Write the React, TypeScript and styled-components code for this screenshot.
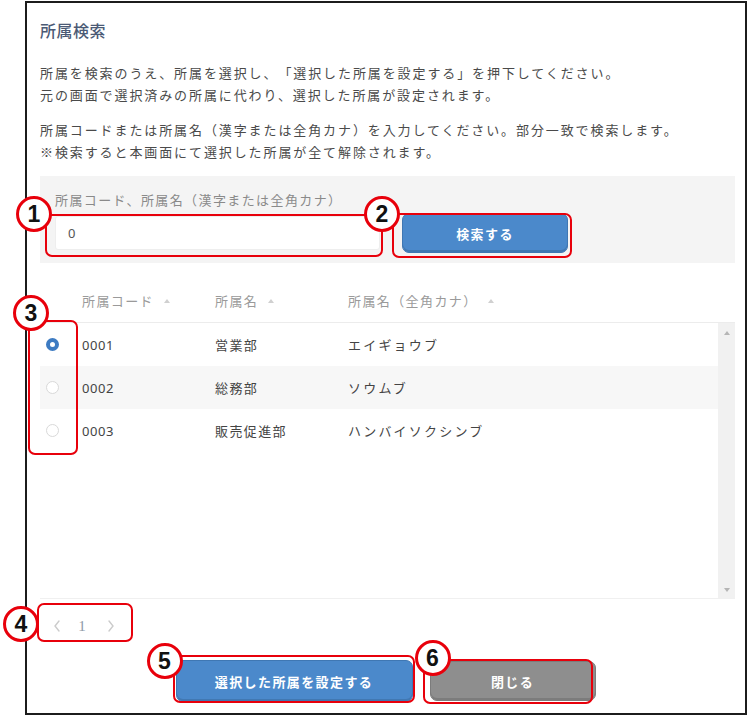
import React, {useState} from 'react';
import styled, {createGlobalStyle} from 'styled-components';

const GlobalStyle = createGlobalStyle`
  body {
    margin: 0;
    background: #fff;
    font-family: "Noto Sans CJK JP", "Noto Sans", sans-serif;
    text-spacing-trim: space-all;
  }
`;

const Frame = styled.div`
  box-sizing: border-box;
  margin: 1px 0 0 25px;
  width: 722px;
  height: 714px;
  border: 2px solid #1c1c1c;
  padding: 15px 10px 0 13px;
  display: flex;
  flex-direction: column;
`;

const Title = styled.h1`
  margin: 0;
  font-size: 16px;
  line-height: 24px;
  font-weight: 500;
  letter-spacing: 0.5px;
  color: #4b5a75;
`;

const Paragraph = styled.p<{ $gap: number }>`
  margin: ${p => p.$gap}px 0 0;
  font-size: 13px;
  line-height: 22px;
  letter-spacing: 1.9px;
  color: #4a4a4a;
  white-space: nowrap;
`;

const SearchPanel = styled.div`
  margin-top: 13px;
  background: #f4f4f4;
  padding: 14px 15px 10px;
  display: flex;
  flex-direction: column;
`;

const Label = styled.div`
  font-size: 13px;
  line-height: 20px;
  letter-spacing: 1.4px;
  color: #8a8a8a;
`;

const SearchRow = styled.div`
  margin-top: 3px;
  height: 40px;
  display: flex;
  align-items: center;
  gap: 22px;
`;

const Marked = styled.div`
  position: relative;
  display: flex;
`;

const Outline = styled.div<{ $t: number; $l: number; $r: number; $b: number }>`
  position: absolute;
  top: ${p => p.$t}px;
  left: ${p => p.$l}px;
  right: ${p => p.$r}px;
  bottom: ${p => p.$b}px;
  border: 2px solid #e8000b;
  border-radius: 7px;
  pointer-events: none;
`;

const Badge = styled.div<{ $x: number; $y: number }>`
  position: absolute;
  left: ${p => p.$x - 18}px;
  top: ${p => p.$y - 18}px;
  box-sizing: border-box;
  width: 36px;
  height: 36px;
  border-radius: 50%;
  border: 3px solid #e8000b;
  background: #fff;
  display: flex;
  align-items: center;
  justify-content: center;
  font-family: "Liberation Sans", Arial, sans-serif;
  font-weight: 700;
  font-size: 23px;
  color: #111;
  z-index: 2;
`;

const Input = styled.input`
  box-sizing: border-box;
  width: 325px;
  height: 34px;
  border: 1px solid #eeeeee;
  border-radius: 3px;
  background: #fff;
  padding: 0 12px;
  font-size: 13px;
  font-family: "Noto Sans", sans-serif;
  color: #555;
  outline: none;
`;

const Button = styled.button<{ $tone: 'blue' | 'gray'; $w: number }>`
  box-sizing: border-box;
  width: ${p => p.$w}px;
  height: ${p => (p.$tone === 'gray' ? 40 : 42)}px;
  border: 1px solid ${p => (p.$tone === 'blue' ? '#3f77b3' : '#7c7c7c')};
  border-radius: 7px;
  background: ${p => (p.$tone === 'blue' ? '#4b89cb' : '#8e8e8e')};
  box-shadow: inset 0 -2px 0 rgba(0, 0, 0, 0.12);
  color: #fff;
  font-family: "Noto Sans CJK JP", sans-serif;
  font-size: 13px;
  font-weight: 700;
  letter-spacing: 1.4px;
  cursor: pointer;
`;

const SearchButton = styled(Button)`
  height: 40px;
`;

const cols = '40px 133px 133px 1fr';

const HeaderRow = styled.div`
  margin-top: 16px;
  height: 43px;
  display: grid;
  grid-template-columns: ${cols};
  align-items: center;
  border-bottom: 1px solid #ececec;
`;

const HeadCell = styled.div`
  padding-left: 2px;
  font-size: 13px;
  letter-spacing: 1.4px;
  color: #9a9a9a;
  display: flex;
  align-items: center;
  gap: 10px;
`;

const SortArrow = styled.span`
  width: 0;
  height: 0;
  border-left: 3px solid transparent;
  border-right: 3px solid transparent;
  border-bottom: 4px solid #d0d0d0;
`;

const Body = styled.div`
  position: relative;
  height: 275px;
  display: flex;
  border-bottom: 1px solid #f0f0f0;
`;

const Rows = styled.div`
  flex: 1;
  display: flex;
  flex-direction: column;
`;

const Row = styled.div<{ $alt: boolean }>`
  height: 43px;
  display: grid;
  grid-template-columns: ${cols};
  align-items: center;
  background: ${p => (p.$alt ? '#f7f7f7' : '#fff')};
  cursor: pointer;
`;

const Cell = styled.div<{ $kana?: boolean }>`
  padding-left: 2px;
  font-size: 13px;
  letter-spacing: ${p => (p.$kana ? 2.2 : 1.4)}px;
  color: #444;
`;

const Code = styled.div`
  padding-left: 2px;
  font-family: "Noto Sans", sans-serif;
  font-size: 13px;
  letter-spacing: 0.6px;
  color: #444;
`;

const Radio = styled.span<{ $on: boolean }>`
  box-sizing: border-box;
  margin-left: 6px;
  width: 13px;
  height: 13px;
  border-radius: 50%;
  border: ${p => (p.$on ? '4px solid #3d7bc2' : '1px solid #d9d9d9')};
  background: #fff;
`;

const ScrollTrack = styled.div`
  width: 17px;
  background: #f1f1f1;
  display: flex;
  flex-direction: column;
  justify-content: space-between;
  align-items: center;
  padding: 8px 0 6px;
`;

const Arrow = styled.span<{ $down?: boolean }>`
  width: 0;
  height: 0;
  border-left: 3px solid transparent;
  border-right: 3px solid transparent;
  ${p => (p.$down ? 'border-top: 4px solid #b5b5b5;' : 'border-bottom: 4px solid #b5b5b5;')}
`;

const Pager = styled.div`
  position: relative;
  margin-top: 12px;
  width: 93px;
  height: 30px;
  display: flex;
  align-items: center;
  padding-left: 13px;
  box-sizing: border-box;
`;

const PageNum = styled.span`
  width: 14px;
  margin: 0 18px 0 14px;
  text-align: center;
  font-family: "Liberation Serif", serif;
  font-size: 15px;
  color: #8f9aa8;
`;

const Chevron: React.FC<{ right?: boolean }> = ({right}) => (
    <svg width="8" height="14" viewBox="0 0 8 14">
        <path
            d={right ? 'M2 2 L6 7 L2 12' : 'M6 2 L2 7 L6 12'}
            fill="none"
            stroke="#cbcbcb"
            strokeWidth="1.4"
            strokeLinecap="round"
        />
    </svg>
);

const Footer = styled.div`
  margin-top: 19px;
  display: flex;
  justify-content: center;
  align-items: center;
  gap: 17px;
  padding-right: 4px;
`;

const rows = [
    {code: '0001', name: '営業部', kana: 'エイギョウブ'},
    {code: '0002', name: '総務部', kana: 'ソウムブ'},
    {code: '0003', name: '販売促進部', kana: 'ハンバイソクシンブ'},
];

const App: React.FC = () => {
    const [selected, setSelected] = useState('0001');
    const [keyword, setKeyword] = useState('0');

    return (
        <>
            <GlobalStyle />
            <Frame>
                <Title>所属検索</Title>
                <Paragraph $gap={20}>
                    所属を検索のうえ、所属を選択し、「選択した所属を設定する」を押下してください。<br />
                    元の画面で選択済みの所属に代わり、選択した所属が設定されます。
                </Paragraph>
                <Paragraph $gap={13}>
                    所属コードまたは所属名（漢字または全角カナ）を入力してください。部分一致で検索します。<br />
                    ※検索すると本画面にて選択した所属が全て解除されます。
                </Paragraph>

                <SearchPanel>
                    <Label>所属コード、所属名（漢字または全角カナ）</Label>
                    <SearchRow>
                        <Marked>
                            <Input value={keyword} onChange={e => setKeyword(e.target.value)} />
                            <Outline $t={-2} $l={-10} $r={-3} $b={-7} />
                            <Badge $x={-21} $y={-2}>1</Badge>
                        </Marked>
                        <Marked>
                            <SearchButton $tone="blue" $w={166}>検索する</SearchButton>
                            <Outline $t={0} $l={-10} $r={-4} $b={-5} />
                            <Badge $x={-20} $y={1}>2</Badge>
                        </Marked>
                    </SearchRow>
                </SearchPanel>

                <HeaderRow>
                    <div />
                    <HeadCell>所属コード<SortArrow /></HeadCell>
                    <HeadCell>所属名<SortArrow /></HeadCell>
                    <HeadCell>所属名（全角カナ）<SortArrow /></HeadCell>
                </HeaderRow>
                <Body>
                    <Rows>
                        {rows.map((r, i) => (
                            <Row key={r.code} $alt={i % 2 === 1} onClick={() => setSelected(r.code)}>
                                <Radio $on={selected === r.code} />
                                <Code>{r.code}</Code>
                                <Cell>{r.name}</Cell>
                                <Cell $kana>{r.kana}</Cell>
                            </Row>
                        ))}
                    </Rows>
                    <ScrollTrack>
                        <Arrow />
                        <Arrow $down />
                    </ScrollTrack>
                    <Outline $t={-3} $l={-12} $r={657} $b={143} />
                    <Badge $x={-9} $y={-10}>3</Badge>
                </Body>

                <Pager>
                    <Chevron />
                    <PageNum>1</PageNum>
                    <Chevron right />
                    <Outline $t={-8} $l={-3} $r={0} $b={-1} />
                    <Badge $x={-19} $y={13}>4</Badge>
                </Pager>

                <Footer>
                    <Marked>
                        <Button $tone="blue" $w={237}>選択した所属を設定する</Button>
                        <Outline $t={-5} $l={-3} $r={-2} $b={-1} />
                        <Badge $x={-11} $y={1}>5</Badge>
                    </Marked>
                    <Marked>
                        <Button $tone="gray" $w={166}>閉じる</Button>
                        <Outline $t={-2} $l={-7} $r={3} $b={-3} />
                        <Badge $x={3} $y={-3}>6</Badge>
                    </Marked>
                </Footer>
            </Frame>
        </>
    );
};

export default App;
